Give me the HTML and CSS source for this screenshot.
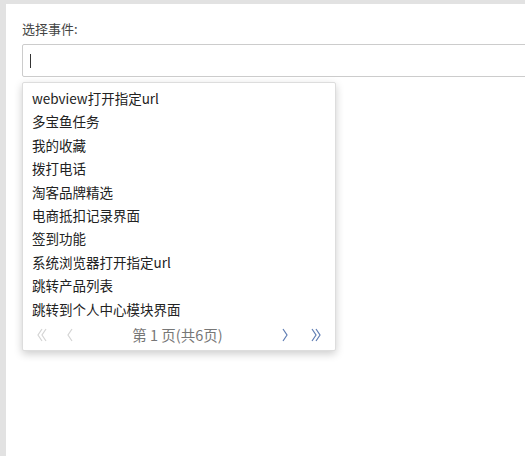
FILE: index.html
```html
<!DOCTYPE html>
<html>
<head>
<meta charset="utf-8">
<link rel="stylesheet" href="styles.css">
</head>
<body>
<div class="panel">
  <div class="label">选择事件:</div>
  <div class="input"><span class="caret"></span></div>
  <div class="dropdown">
    <ul class="list">
      <li>webview打开指定url</li>
      <li>多宝鱼任务</li>
      <li>我的收藏</li>
      <li>拨打电话</li>
      <li>淘客品牌精选</li>
      <li>电商抵扣记录界面</li>
      <li>签到功能</li>
      <li>系统浏览器打开指定url</li>
      <li>跳转产品列表</li>
      <li>跳转到个人中心模块界面</li>
    </ul>
    <div class="pager">
      <span class="btn first disabled"><svg width="10" height="14" viewBox="0 0 10 14"><path d="M5 1 L1 7 L5 13 M9 1 L5 7 L9 13" fill="none" stroke="currentColor" stroke-width="1.2"/></svg></span>
      <span class="btn prev disabled"><svg width="6" height="14" viewBox="0 0 6 14"><path d="M5 1 L1 7 L5 13" fill="none" stroke="currentColor" stroke-width="1.2"/></svg></span>
      <span class="info">第 1 页(共6页)</span>
      <span class="btn next"><svg width="6" height="14" viewBox="0 0 6 14"><path d="M1 1 L5 7 L1 13" fill="none" stroke="currentColor" stroke-width="1.2"/></svg></span>
      <span class="btn last"><svg width="10" height="14" viewBox="0 0 10 14"><path d="M1 1 L5 7 L1 13 M5 1 L9 7 L5 13" fill="none" stroke="currentColor" stroke-width="1.2"/></svg></span>
    </div>
  </div>
</div>
</body>
</html>
```
FILE: styles.css
```css
html, body {
  margin: 0;
  padding: 0;
  height: 100%;
  overflow: hidden;
}
body {
  background: #e2e2e2;
  font-family: "Noto Sans CJK SC", "Liberation Sans", sans-serif;
}
.panel {
  margin: 4px 0 0 6px;
  background: #fff;
  height: 452px;
  padding: 16px 0 0 16px;
  box-sizing: border-box;
  overflow: hidden;
}
.label {
  font-size: 13px;
  line-height: 18px;
  color: #444;
  margin-bottom: 6px;
}
.input {
  width: 560px;
  height: 33px;
  box-sizing: border-box;
  border: 1px solid #ccc;
  border-radius: 2px;
  display: flex;
  align-items: center;
  padding-left: 7px;
}
.caret {
  width: 1px;
  height: 14px;
  background: #333;
}
.dropdown {
  margin-top: 5px;
  width: 314px;
  box-sizing: border-box;
  border: 1px solid #ddd;
  border-radius: 2px;
  box-shadow: 0 3px 9px rgba(0,0,0,0.2);
  background: #fff;
}
.list {
  list-style: none;
  margin: 0;
  padding: 4px 0 0 0;
}
.list li {
  font-size: 13.5px;
  line-height: 23.4px;
  height: 23.4px;
  padding-left: 9px;
  color: #222;
  white-space: nowrap;
}
.pager {
  display: flex;
  align-items: center;
  height: 28px;
  padding: 0 5px 1px 5px;
}
.btn {
  width: 28px;
  display: flex;
  justify-content: center;
  align-items: center;
  color: #5f7db3;
}
.btn.disabled {
  color: #d4d4d4;
}
.btn svg { display: block; }
.info {
  flex: 1;
  text-align: center;
  font-size: 14.5px;
  color: #777;
}
.next { margin-right: 3px; }
```
